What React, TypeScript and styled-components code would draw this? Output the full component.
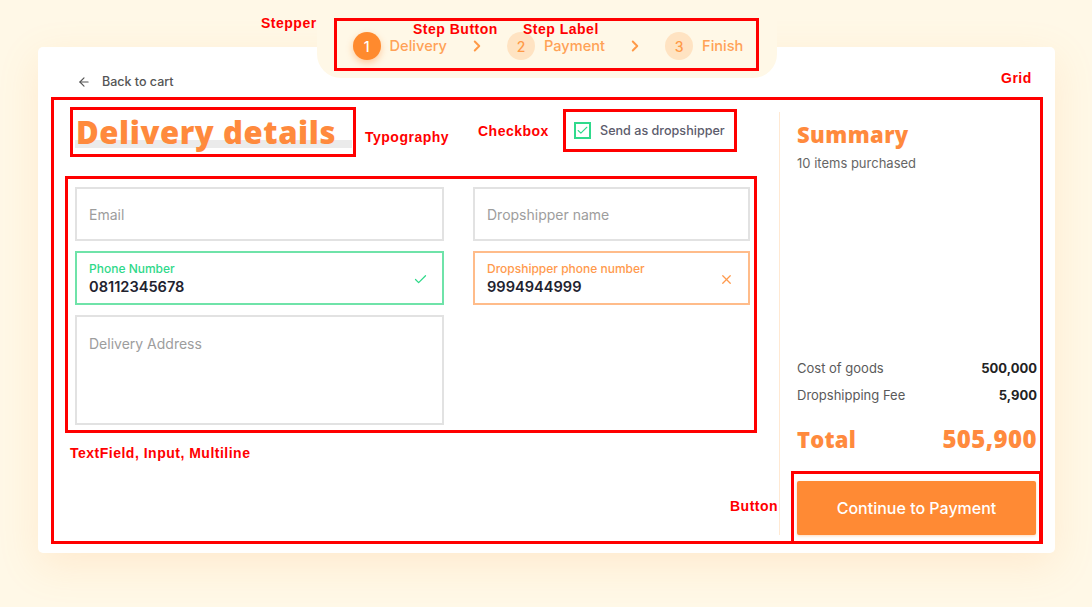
import React from 'react';
import styled, { createGlobalStyle } from 'styled-components';
import { ArrowLeft, Check, ChevronRight, X } from 'lucide-react';

const CREAM = '#FFF8E7';
const ORANGE = '#FF8A34';
const RED = '#FF0000';

const GlobalStyle = createGlobalStyle`
  html, body { margin: 0; padding: 0; background: ${CREAM}; }
  body { font-family: Inter, "Noto Sans", sans-serif; width: 1092px; height: 607px; overflow: hidden; }
  * { box-sizing: border-box; }
`;

const Page = styled.div`
  position: relative;
  width: 1092px;
  height: 607px;
  padding: 47px 37px 0 38px;
`;

const Card = styled.div`
  background: #fff;
  border-radius: 5px;
  width: 1017px;
  height: 506px;
  box-shadow: 0 12px 40px rgba(255, 170, 80, 0.16);
  display: flex;
  flex-direction: column;
`;

const Header = styled.div`
  display: grid;
  grid-template-columns: 1fr 460px 1fr;
  align-items: start;
`;

const BackLink = styled.a`
  display: flex;
  align-items: center;
  gap: 11px;
  margin: 26px 0 0 39px;
  font-size: 12.5px;
  line-height: 18px;
  font-weight: 500;
  color: #555;
  text-decoration: none;
`;

const Tab = styled.div`
  margin-top: -26px;
  height: 57px;
  padding-bottom: 10px;
  background: ${CREAM};
  border-radius: 0 0 24px 24px;
  display: flex;
  justify-content: center;
  align-items: flex-end;
`;

const Stepper = styled.nav`
  display: flex;
  align-items: center;
  height: 47px;
  padding: 3px 13px 0 16px;
  outline: 3px solid ${RED};
`;

const Step = styled.div`
  display: flex;
  align-items: center;
  gap: 9px;
`;

const StepCircle = styled.span<{ $active?: boolean }>`
  width: 28px;
  height: 28px;
  border-radius: 50%;
  display: flex;
  align-items: center;
  justify-content: center;
  font-size: 14px;
  font-weight: 500;
  background: ${(p) => (p.$active ? '#FF8A2E' : '#FFE3C2')};
  color: ${(p) => (p.$active ? '#fff' : '#FF9A48')};
  box-shadow: ${(p) => (p.$active ? '0 3px 7px rgba(255, 120, 20, 0.35)' : 'none')};
`;

const StepLabel = styled.span`
  font-size: 14.6px;
  font-weight: 500;
  color: #FFA257;
`;

const StepChevron = styled.span`
  display: flex;
  margin: 0 21px;
  color: #FF9A48;
`;

const MainGrid = styled.div`
  margin: 9px 15px 12px 16px;
  flex: 1;
  display: grid;
  grid-template-columns: 725px 1px 1fr;
  outline: 3px solid ${RED};
`;

const LeftColumn = styled.section`
  display: flex;
  flex-direction: column;
  padding: 10px 25px 0 14px;
`;

const HeadingRow = styled.div`
  display: flex;
  align-items: flex-start;
  gap: 213px;
`;

const HeadingBox = styled.div`
  width: 280px;
  height: 44px;
  margin-left: 5px;
  padding-left: 3px;
  display: flex;
  align-items: center;
  outline: 3px solid ${RED};
  background: linear-gradient(#ebebeb, #ebebeb) no-repeat 2px 30px / 277px 8px;
`;

const Heading = styled.h1`
  margin: 0;
  font-family: "Open Sans", Inter, sans-serif;
  font-weight: 800;
  font-size: 31px;
  line-height: 40px;
  letter-spacing: 0.6px;
  color: #FF8A3D;
`;

const CheckboxBox = styled.label`
  margin-top: 2px;
  height: 37px;
  display: flex;
  align-items: center;
  gap: 9px;
  padding: 0 9px 0 8px;
  outline: 3px solid ${RED};
  font-size: 12.6px;
  font-weight: 500;
  color: #5c5c6c;
`;

const CheckSquare = styled.span`
  width: 17px;
  height: 17px;
  border: 2px solid #2FDA8C;
  display: flex;
  align-items: center;
  justify-content: center;
  color: #2FDA8C;
`;

const FormBox = styled.div`
  margin-top: 25px;
  outline: 3px solid ${RED};
  padding: 8px 4px 5px 7px;
  display: grid;
  grid-template-columns: 369px 277px;
  grid-template-rows: 54px 54px 110px;
  column-gap: 29px;
  row-gap: 10px;
`;

const tones = {
  idle: { border: '#e2e2e2', label: '#999' },
  ok: { border: '#6FE3A9', label: '#2FD98A' },
  error: { border: '#FFBC8A', label: '#FF9A4D' },
};

const Field = styled.div<{ $tone: keyof typeof tones; $multiline?: boolean }>`
  border: 2px solid ${(p) => tones[p.$tone].border};
  padding: ${(p) => (p.$multiline ? '17px 14px 0 12px' : '2px 14px 0 12px')};
  display: flex;
  align-items: ${(p) => (p.$multiline ? 'flex-start' : 'center')};
  justify-content: space-between;
  color: ${(p) => tones[p.$tone].label};
`;

const FieldText = styled.div`
  display: flex;
  flex-direction: column;
`;

const Placeholder = styled.span`
  font-size: 14px;
  line-height: 20px;
  color: #9d9d9d;
`;

const FieldLabel = styled.span`
  font-size: 12px;
  line-height: 16px;
  font-weight: 500;
`;

const FieldValue = styled.span`
  font-size: 14.6px;
  line-height: 20px;
  font-weight: 600;
  color: #22222e;
`;

const Divider = styled.div`
  background: #FFE9D3;
  margin: 12px 0 6px;
`;

const RightColumn = styled.aside`
  display: flex;
  flex-direction: column;
  padding: 20px 3px 0 17px;
`;

const SummaryTitle = styled.h2`
  margin: 0;
  font-family: "Open Sans", Inter, sans-serif;
  font-weight: 800;
  font-size: 22px;
  line-height: 28px;
  letter-spacing: 0.4px;
  color: #FF8A3D;
`;

const SummarySub = styled.p`
  margin: 6px 0 0;
  font-size: 13px;
  line-height: 18px;
  color: #666;
`;

const Spacer = styled.div`
  flex: 1;
`;

const CostRow = styled.div`
  display: flex;
  justify-content: space-between;
  font-size: 13px;
  line-height: 20px;
  color: #5a5a5a;
  & + & { margin-top: 7px; }
`;

const CostValue = styled.span`
  font-weight: 700;
  color: #222;
`;

const TotalRow = styled.div`
  margin-top: 20px;
  display: flex;
  justify-content: space-between;
  align-items: center;
  font-family: "Open Sans", Inter, sans-serif;
  font-weight: 800;
  font-size: 22px;
  line-height: 28px;
  letter-spacing: 0.2px;
  color: #FF8A3D;
`;

const TotalValue = styled.span`
  font-size: 24px;
  letter-spacing: 0.4px;
`;

const ButtonBox = styled.div`
  margin: 21px -2px 0 -3px;
  padding: 7px 3px 6px 3px;
  outline: 3px solid ${RED};
`;

const PrimaryButton = styled.button`
  width: 100%;
  height: 54px;
  border: none;
  border-radius: 2px;
  background: ${ORANGE};
  color: #fff;
  font-family: Inter, sans-serif;
  font-size: 16px;
  font-weight: 500;
  box-shadow: 0 1px 3px rgba(255, 130, 30, 0.3);
`;

const Note = styled.span<{ $x: number; $y: number }>`
  position: absolute;
  left: ${(p) => p.$x}px;
  top: ${(p) => p.$y}px;
  font-family: "Liberation Sans", Arial, sans-serif;
  font-weight: 700;
  font-size: 14px;
  line-height: 16px;
  letter-spacing: 0.5px;
  color: ${RED};
  white-space: nowrap;
`;

export default function App() {
  return (
    <>
      <GlobalStyle />
      <Page>
        <Card>
          <Header>
            <BackLink>
              <ArrowLeft size={14} strokeWidth={2} />
              Back to cart
            </BackLink>
            <Tab>
              <Stepper>
                <Step>
                  <StepCircle $active>1</StepCircle>
                  <StepLabel>Delivery</StepLabel>
                </Step>
                <StepChevron><ChevronRight size={18} strokeWidth={2.6} /></StepChevron>
                <Step>
                  <StepCircle>2</StepCircle>
                  <StepLabel>Payment</StepLabel>
                </Step>
                <StepChevron><ChevronRight size={18} strokeWidth={2.6} /></StepChevron>
                <Step>
                  <StepCircle>3</StepCircle>
                  <StepLabel>Finish</StepLabel>
                </Step>
              </Stepper>
            </Tab>
            <div />
          </Header>
          <MainGrid>
            <LeftColumn>
              <HeadingRow>
                <HeadingBox>
                  <Heading>Delivery details</Heading>
                </HeadingBox>
                <CheckboxBox>
                  <CheckSquare><Check size={13} strokeWidth={2} /></CheckSquare>
                  Send as dropshipper
                </CheckboxBox>
              </HeadingRow>
              <FormBox>
                <Field $tone="idle"><Placeholder>Email</Placeholder></Field>
                <Field $tone="idle"><Placeholder>Dropshipper name</Placeholder></Field>
                <Field $tone="ok">
                  <FieldText>
                    <FieldLabel>Phone Number</FieldLabel>
                    <FieldValue>08112345678</FieldValue>
                  </FieldText>
                  <Check size={15} strokeWidth={2} />
                </Field>
                <Field $tone="error">
                  <FieldText>
                    <FieldLabel>Dropshipper phone number</FieldLabel>
                    <FieldValue>9994944999</FieldValue>
                  </FieldText>
                  <X size={15} strokeWidth={2} />
                </Field>
                <Field $tone="idle" $multiline><Placeholder>Delivery Address</Placeholder></Field>
              </FormBox>
            </LeftColumn>
            <Divider />
            <RightColumn>
              <SummaryTitle>Summary</SummaryTitle>
              <SummarySub>10 items purchased</SummarySub>
              <Spacer />
              <CostRow><span>Cost of goods</span><CostValue>500,000</CostValue></CostRow>
              <CostRow><span>Dropshipping Fee</span><CostValue>5,900</CostValue></CostRow>
              <TotalRow><span>Total</span><TotalValue>505,900</TotalValue></TotalRow>
              <ButtonBox>
                <PrimaryButton>Continue to Payment</PrimaryButton>
              </ButtonBox>
            </RightColumn>
          </MainGrid>
        </Card>
        <Note $x={261} $y={15}>Stepper</Note>
        <Note $x={413} $y={21}>Step Button</Note>
        <Note $x={523} $y={21}>Step Label</Note>
        <Note $x={1001} $y={70}>Grid</Note>
        <Note $x={365} $y={129}>Typography</Note>
        <Note $x={478} $y={123}>Checkbox</Note>
        <Note $x={70} $y={445}>TextField, Input, Multiline</Note>
        <Note $x={730} $y={498}>Button</Note>
      </Page>
    </>
  );
}
